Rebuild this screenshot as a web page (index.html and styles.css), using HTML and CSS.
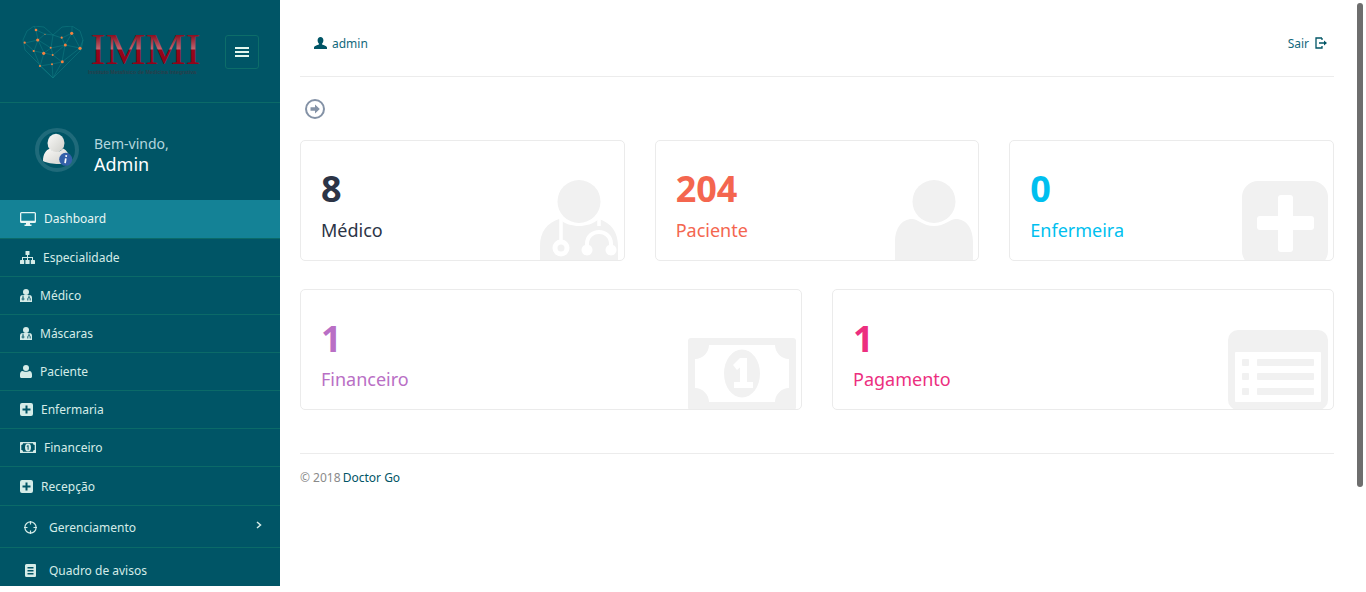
FILE: index.html
```html
<!DOCTYPE html>
<html lang="pt-br">
<head>
  <meta charset="UTF-8" />
  <title>Doctor Go - Dashboard</title>
  <link rel="stylesheet" href="styles.css">
</head>
<body>
  <div class="layout">
    <aside class="sidebar">
      <div class="brand">
        <svg class="logo" width="190" height="64" viewBox="0 0 190 64">
          <defs>
            <linearGradient id="logo-red" x1="0" y1="0" x2="0" y2="1">
              <stop offset="0.22" stop-color="#8a0f20"/>
              <stop offset="0.5" stop-color="#c0646e"/>
              <stop offset="0.52" stop-color="#96061a"/>
              <stop offset="1" stop-color="#8c0018"/>
            </linearGradient>
          </defs>
          <g fill="none" stroke="#0f7a82" stroke-width="0.6">
            <path d="M31 52 L3 24 L1 14 L5 5 L12 0 L22 1 L31 9 L40 1 L50 0 L58 5 L61 14 L59 24 Z"/>
            <path d="M12 0 L14 4 L16 14 L3 17 M16 14 L23 8 L31 9 M23 8 L14 4 M16 14 L12 25 L3 17 M12 25 L22 27 L16 14 M22 27 L29 22 L16 14 M29 22 L31 9 M29 22 L31 29 L22 27 M22 27 L18 40 L12 25 M31 29 L40 36 L30 38 L18 40 M30 38 L31 52 M18 40 L31 52 M40 36 L31 52 M31 29 L43 19 L29 22 M43 19 L40 12 L31 9 M40 12 L50 7 L50 0 M50 7 L43 19 L58 22 L50 7 M58 22 L61 14 M58 22 L40 36 M43 19 L40 36"/>
          </g>
          <g fill="#f5813f">
            <circle cx="14" cy="4" r="1.3"/>
            <circle cx="23" cy="8.3" r="0.6"/>
            <circle cx="49.7" cy="7.3" r="1.6"/>
            <circle cx="39.7" cy="11.7" r="1.1"/>
            <circle cx="15.7" cy="14" r="1.6"/>
            <circle cx="2.7" cy="16.7" r="1.1"/>
            <circle cx="28.7" cy="21.7" r="1"/>
            <circle cx="43.3" cy="19" r="1.5"/>
            <circle cx="58" cy="22.3" r="1.6"/>
            <circle cx="11.7" cy="25" r="1.1"/>
            <circle cx="21.7" cy="27.3" r="1.6"/>
            <circle cx="30.7" cy="29" r="1"/>
            <circle cx="40.3" cy="35.7" r="1.5"/>
            <circle cx="30" cy="38.3" r="1"/>
            <circle cx="18" cy="40" r="1.1"/>
          </g>
          <text class="logo-name" x="68.5" y="38" fill="url(#logo-red)">IMMI</text>
          <text class="logo-sub" x="66" y="48">Instituto Metafísico de Medicina Integrativa</text>
        </svg>
        <button class="menu-toggle" type="button" aria-label="Menu">
          <span></span><span></span><span></span>
        </button>
      </div>

      <div class="welcome">
        <div class="avatar">
          <svg width="44" height="44" viewBox="0 0 44 44">
            <defs>
              <linearGradient id="avatar-grey" x1="0" y1="0" x2="1" y2="1">
                <stop offset="0" stop-color="#fafaf8"/>
                <stop offset="1" stop-color="#cfcfca"/>
              </linearGradient>
            </defs>
            <circle cx="22" cy="22" r="20" fill="none" stroke="#1f6a7a" stroke-width="4"/>
            <ellipse cx="21" cy="15" rx="8.5" ry="9.2" fill="url(#avatar-grey)"/>
            <path d="M8 33 C8 26 11 22 15 20.5 C18 25 25 25 28 20.5 C32 22 35 27 35 35 C27 36.5 14 36.5 8 33 Z" fill="url(#avatar-grey)"/>
            <circle cx="30.7" cy="31.3" r="6.5" fill="#3460a8"/>
            <path d="M31.3 27.2 L31.1 28.8 M30.8 30.3 L30.1 35.2" stroke="#fff" stroke-width="1.7" fill="none"/>
          </svg>
        </div>
        <div class="welcome-text">
          <span class="welcome-hello">Bem-vindo,</span>
          <span class="welcome-name">Admin</span>
        </div>
      </div>

      <ul class="nav">
        <li class="nav-item active h39">
          <svg class="ico" width="16" height="14" viewBox="0 0 16 14"><path fill="currentColor" fill-rule="evenodd" d="M1.5 0H14.5A1.5 1.5 0 0 1 16 1.5V9.5A1.5 1.5 0 0 1 14.5 11H10V12.5H11.5V14H4.5V12.5H6V11H1.5A1.5 1.5 0 0 1 0 9.5V1.5A1.5 1.5 0 0 1 1.5 0ZM1.3 1.3V8.7H14.7V1.3Z"/></svg>
          Dashboard
        </li>
        <li class="nav-item h38">
          <svg class="ico" width="15" height="13" viewBox="0 0 15 13"><g fill="currentColor"><rect x="5.5" y="0" width="4" height="4" rx="0.5"/><rect x="0" y="9" width="4.2" height="4" rx="0.5"/><rect x="5.4" y="9" width="4.2" height="4" rx="0.5"/><rect x="10.8" y="9" width="4.2" height="4" rx="0.5"/><rect x="7" y="4" width="1" height="5"/><rect x="2" y="6" width="11" height="1"/><rect x="2" y="6" width="1" height="3"/><rect x="12" y="6" width="1" height="3"/></g></svg>
          Especialidade
        </li>
        <li class="nav-item h38">
          <svg class="ico" width="12" height="13" viewBox="0 0 12 13"><circle cx="6" cy="3" r="3" fill="currentColor"/><path fill="currentColor" d="M2.5 6H9.5C11 6 12 7.2 12 9V13H0V9C0 7.2 1 6 2.5 6Z"/><g fill="none" stroke="#005566" stroke-width="0.9"><circle cx="3" cy="10" r="1"/><path d="M3 6.5V9M7.8 11.5V9.8C7.8 8 10.2 8 10.2 9.8V11.5M9 6.5V8"/></g></svg>
          Médico
        </li>
        <li class="nav-item h38">
          <svg class="ico" width="12" height="13" viewBox="0 0 12 13"><circle cx="6" cy="3" r="3" fill="currentColor"/><path fill="currentColor" d="M2.5 6H9.5C11 6 12 7.2 12 9V13H0V9C0 7.2 1 6 2.5 6Z"/><g fill="none" stroke="#005566" stroke-width="0.9"><circle cx="3" cy="10" r="1"/><path d="M3 6.5V9M7.8 11.5V9.8C7.8 8 10.2 8 10.2 9.8V11.5M9 6.5V8"/></g></svg>
          Máscaras
        </li>
        <li class="nav-item h38">
          <svg class="ico" width="12" height="13" viewBox="0 0 12 13"><circle cx="6" cy="3" r="3" fill="currentColor"/><path fill="currentColor" d="M2.5 6C4 7 8 7 9.5 6C11 6.2 12 7.5 12 9.5V11.5C12 12.4 11.4 13 10.5 13H1.5C0.6 13 0 12.4 0 11.5V9.5C0 7.5 1 6.2 2.5 6Z"/></svg>
          Paciente
        </li>
        <li class="nav-item h38">
          <svg class="ico" width="13" height="13" viewBox="0 0 13 13"><path fill="currentColor" fill-rule="evenodd" d="M2 0H11A2 2 0 0 1 13 2V11A2 2 0 0 1 11 13H2A2 2 0 0 1 0 11V2A2 2 0 0 1 2 0ZM5.5 2.5V5.5H2.5V7.5H5.5V10.5H7.5V7.5H10.5V5.5H7.5V2.5Z"/></svg>
          Enfermaria
        </li>
        <li class="nav-item h38">
          <svg class="ico" width="16" height="11" viewBox="0 0 16 11"><rect width="16" height="11" rx="0.5" fill="currentColor"/><path fill="#005566" d="M3 1.3H13C13 2.5 13.5 3 14.7 3V8C13.5 8 13 8.5 13 9.7H3C3 8.5 2.5 8 1.3 8V3C2.5 3 3 2.5 3 1.3Z"/><ellipse cx="8" cy="5.5" rx="3" ry="3.9" fill="currentColor"/><path fill="#005566" d="M7.6 3.2H8.6V7.8H7.6V4.4L7 4.8L6.6 4.2Z"/></svg>
          Financeiro
        </li>
        <li class="nav-item h39">
          <svg class="ico" width="13" height="13" viewBox="0 0 13 13"><path fill="currentColor" fill-rule="evenodd" d="M2 0H11A2 2 0 0 1 13 2V11A2 2 0 0 1 11 13H2A2 2 0 0 1 0 11V2A2 2 0 0 1 2 0ZM5.5 2.5V5.5H2.5V7.5H5.5V10.5H7.5V7.5H10.5V5.5H7.5V2.5Z"/></svg>
          Recepção
        </li>
        <li class="nav-item nav-sub h42">
          <svg class="ico-wide" width="13" height="13" viewBox="0 0 13 13"><g fill="none" stroke="currentColor" stroke-width="1.2"><circle cx="6.5" cy="6.5" r="5.6"/><path d="M6.5 0V3.5M6.5 9.5V13M0 6.5H3.5M9.5 6.5H13"/></g></svg>
          <span>Gerenciamento</span>
          <svg class="chevron" width="6" height="8" viewBox="0 0 6 8"><path d="M1 1L4.5 4L1 7" fill="none" stroke="currentColor" stroke-width="1.5"/></svg>
        </li>
        <li class="nav-item nav-sub last">
          <svg class="ico-wide" width="13" height="13" viewBox="0 0 13 13"><path fill="currentColor" fill-rule="evenodd" d="M2.5 0H11A1 1 0 0 1 12 1V12A1 1 0 0 1 11 13H2.5A1.5 1.5 0 0 1 1 11.5V1.5A1.5 1.5 0 0 1 2.5 0ZM3.5 3V4.5H9.5V3ZM3.5 6V7.5H9.5V6ZM3.5 9V10.5H9.5V9Z"/></svg>
          <span>Quadro de avisos</span>
        </li>
      </ul>
    </aside>

    <main class="content">
      <header class="topbar">
        <a class="top-link">
          <svg width="13" height="12" viewBox="0 0 13 12"><path fill="currentColor" d="M6.5 0C8.3 0 9.4 1.3 9.4 3.2C9.4 4.6 8.8 5.8 8.1 6.6V7.5C9.5 8.3 13 8.8 13 10.5V12H0V10.5C0 8.8 3.5 8.3 4.9 7.5V6.6C4.2 5.8 3.6 4.6 3.6 3.2C3.6 1.3 4.7 0 6.5 0Z"/></svg>
          admin
        </a>
        <a class="top-link exit-link">
          Sair
          <svg width="12" height="12" viewBox="0 0 12 12"><path fill="none" stroke="currentColor" stroke-width="1.3" d="M7 1H1V11H7V9"/><path fill="none" stroke="currentColor" stroke-width="1.3" d="M7 1V3"/><path fill="currentColor" d="M4 5.3H9V3.5L12 6L9 8.5V6.7H4Z"/></svg>
        </a>
      </header>

      <div class="page-tools">
        <svg width="20" height="20" viewBox="0 0 20 20"><circle cx="10" cy="10" r="9" fill="none" stroke="#8492a6" stroke-width="2"/><path fill="#8492a6" d="M5.5 8.3H10V5.5L14.8 10L10 14.5V11.7H5.5Z"/></svg>
      </div>

      <section class="stats stats-3">
        <div class="stat-card">
          <div class="stat-num tone-dark">8</div>
          <div class="stat-label tone-dark">Médico</div>
          <svg class="ghost ghost-doctor" width="78" height="80" viewBox="0 0 78 80">
            <circle cx="39" cy="21.5" r="21.5" fill="#f1f1f1"/>
            <path fill="#f1f1f1" d="M0 80V66C0 52 7 43 19 39C25 44 32 46 39 46C46 46 53 44 59 39C71 43 78 52 78 66V80Z"/>
            <path fill="none" stroke="#fff" stroke-width="3.5" d="M21 38V60"/>
            <circle cx="21" cy="68" r="6" fill="#f1f1f1" stroke="#fff" stroke-width="5"/>
            <path fill="none" stroke="#fff" stroke-width="3.5" d="M59 38V46"/>
            <path fill="none" stroke="#fff" stroke-width="4" d="M47 70V64C47 48 71 48 71 64V70"/>
            <circle cx="47" cy="70" r="5.5" fill="#fff"/>
            <circle cx="71" cy="70" r="5.5" fill="#fff"/>
          </svg>
        </div>
        <div class="stat-card">
          <div class="stat-num tone-red">204</div>
          <div class="stat-label tone-red">Paciente</div>
          <svg class="ghost ghost-user" width="78" height="80" viewBox="0 0 78 80">
            <circle cx="39" cy="21.5" r="21.5" fill="#f1f1f1"/>
            <path fill="#f1f1f1" d="M0 80V62C0 48 7 39 17 39C23 39 28 46 39 46C50 46 55 39 61 39C71 39 78 48 78 62V80Z"/>
          </svg>
        </div>
        <div class="stat-card">
          <div class="stat-num tone-blue">0</div>
          <div class="stat-label tone-blue">Enfermeira</div>
          <svg class="ghost ghost-plus" width="86" height="86" viewBox="0 0 86 86">
            <rect width="86" height="86" rx="16" fill="#f1f1f1"/>
            <rect x="36" y="14" width="15" height="57" rx="3" fill="#fff"/>
            <rect x="15" y="35" width="57" height="14" rx="3" fill="#fff"/>
          </svg>
        </div>
      </section>

      <section class="stats stats-2">
        <div class="stat-card">
          <div class="stat-num tone-purple">1</div>
          <div class="stat-label tone-purple">Financeiro</div>
          <svg class="ghost ghost-money" width="108" height="72" viewBox="0 0 108 72">
            <rect width="108" height="72" rx="3" fill="#f1f1f1"/>
            <path fill="#fff" d="M21 7H87C87 14 93 21 101 21V50C93 50 87 57 87 64H21C21 57 15 50 7 50V21C15 21 21 14 21 7Z"/>
            <ellipse cx="54" cy="35.5" rx="18" ry="24" fill="#f1f1f1"/>
            <g fill="#fff">
              <rect x="52" y="20" width="7" height="29"/>
              <rect x="46" y="44" width="19" height="6"/>
              <path d="M52 20H55V27L49 32L45 27Z"/>
            </g>
          </svg>
        </div>
        <div class="stat-card">
          <div class="stat-num tone-pink">1</div>
          <div class="stat-label tone-pink">Pagamento</div>
          <svg class="ghost ghost-list" width="100" height="80" viewBox="0 0 100 80">
            <rect width="100" height="80" rx="10" fill="#f1f1f1"/>
            <rect x="7" y="22" width="86" height="50" rx="1" fill="#fff"/>
            <g fill="#f1f1f1">
              <rect x="14" y="29" width="7" height="7" rx="1"/>
              <rect x="29" y="29" width="57" height="7" rx="1"/>
              <rect x="14" y="43" width="7" height="7" rx="1"/>
              <rect x="29" y="43" width="57" height="7" rx="1"/>
              <rect x="14" y="58" width="7" height="7" rx="1"/>
              <rect x="29" y="58" width="57" height="7" rx="1"/>
            </g>
          </svg>
        </div>
      </section>

      <footer class="footer">© 2018 <a>Doctor Go</a></footer>
    </main>
  </div>
  <div class="scroll-thumb"></div>
</body>
</html>
```

FILE: styles.css
```css
body {
  font-family: 'Noto Sans', 'Open Sans', sans-serif;
  margin: 0;
  height: 592px;
  overflow: hidden;
  background: #fff;
  color: #333;
}

.layout {
  display: flex;
  align-items: flex-start;
}

/* sidebar */
.sidebar {
  width: 280px;
  height: 586px;
  flex-shrink: 0;
  overflow: hidden;
  background: #005566;
  color: #d5ece8;
}

.brand {
  height: 103px;
  box-sizing: border-box;
  border-bottom: 1px solid #0b6a68;
  display: flex;
  align-items: flex-start;
  padding: 26px 21px 0 22px;
  justify-content: space-between;
}

.logo-name {
  font-family: 'Liberation Serif', serif;
  font-size: 45px;
}

.logo-sub {
  font-family: 'Liberation Sans', sans-serif;
  font-size: 5.3px;
  font-weight: bold;
  fill: #2b3d48;
}

.menu-toggle {
  width: 34px;
  height: 34px;
  margin-top: 9px;
  padding: 0;
  flex-shrink: 0;
  background: transparent;
  border: 1px solid #0d6d69;
  border-radius: 3px;
  display: flex;
  flex-direction: column;
  justify-content: center;
  align-items: center;
  gap: 2px;
}

.menu-toggle span {
  width: 14px;
  height: 2px;
  background: #e4f6ef;
}

.welcome {
  height: 97px;
  box-sizing: border-box;
  padding: 25px 0 0 35px;
  display: flex;
  gap: 15px;
}

.avatar {
  width: 44px;
  height: 44px;
}

.welcome-text {
  display: flex;
  flex-direction: column;
  padding-top: 5px;
}

.welcome-hello {
  font-size: 14px;
  line-height: 21px;
  color: #b4d6de;
}

.welcome-name {
  font-size: 18px;
  line-height: 20px;
  color: #fff;
}

.nav {
  list-style: none;
  margin: 0;
  padding: 0;
}

.nav-item {
  box-sizing: border-box;
  border-bottom: 1px solid #0b6a68;
  padding-left: 20px;
  display: flex;
  align-items: center;
  gap: 8px;
  font-size: 12px;
  color: #d5ece8;
}

.h38 { height: 38px; }
.h39 { height: 39px; }
.h42 { height: 42px; }

.nav-item.active {
  background: #148296;
  color: #e8f6f4;
  padding-bottom: 1px;
}

.ico {
  flex-shrink: 0;
}

.nav-sub {
  padding-left: 24px;
  gap: 12px;
}

.nav-sub.h42 {
  padding-top: 1px;
}

.nav-sub.last {
  height: 39px;
  border-bottom: none;
  padding-top: 6px;
}

.chevron {
  margin-left: auto;
  margin-right: 18px;
  margin-top: -5px;
}

/* content */
.content {
  width: 1034px;
  padding: 0 20px;
}

.topbar {
  height: 77px;
  box-sizing: border-box;
  border-bottom: 1px solid #ececec;
  padding: 10px 7px 0 14px;
  display: flex;
  justify-content: space-between;
  align-items: center;
}

.top-link {
  display: flex;
  align-items: center;
  gap: 5px;
  font-size: 12px;
  color: #11687c;
}

.top-link svg {
  color: #005566;
}

.exit-link {
  gap: 6px;
}

.page-tools {
  height: 63px;
  box-sizing: border-box;
  padding: 22px 0 0 5px;
}

.stats {
  display: grid;
  gap: 30px;
}

.stats-3 {
  grid-template-columns: repeat(3, 1fr);
}

.stats-2 {
  grid-template-columns: repeat(2, 1fr);
  margin-top: 28px;
}

.stat-card {
  position: relative;
  height: 121px;
  box-sizing: border-box;
  padding: 23px 20px 0;
  border: 1px solid #ebebeb;
  border-radius: 5px;
  overflow: hidden;
}

.stat-num {
  font-size: 36px;
  font-weight: bold;
  line-height: 50px;
}

.stat-label {
  font-size: 18px;
  line-height: 25px;
  margin-top: 4px;
}

.stats-2 .stat-card {
  padding-top: 24px;
}

.stats-2 .stat-label {
  margin-top: 3px;
}

.tone-dark { color: #2c3446; }
.tone-red { color: #f4664f; }
.tone-blue { color: #00bfef; }
.tone-purple { color: #b96fc5; }
.tone-pink { color: #ec2f7f; }

/* big faded icons in the corner of the cards */
.ghost {
  position: absolute;
}

.ghost-doctor { left: 239px; top: 39px; }
.ghost-user { left: 239px; top: 39px; }
.ghost-plus { right: 5px; top: 40px; }
.ghost-money { right: 5px; top: 48px; }
.ghost-list { right: 5px; top: 40px; }

.footer {
  margin-top: 43px;
  border-top: 1px solid #ececec;
  padding-top: 15px;
  font-size: 12px;
  line-height: 17px;
  color: #8a8a8a;
}

.footer a {
  color: #005566;
  margin-left: -1px;
}

.scroll-thumb {
  position: absolute;
  left: 1357px;
  top: 3px;
  width: 6px;
  height: 484px;
  border-radius: 3px;
  background: #6e6e6e;
}
```
